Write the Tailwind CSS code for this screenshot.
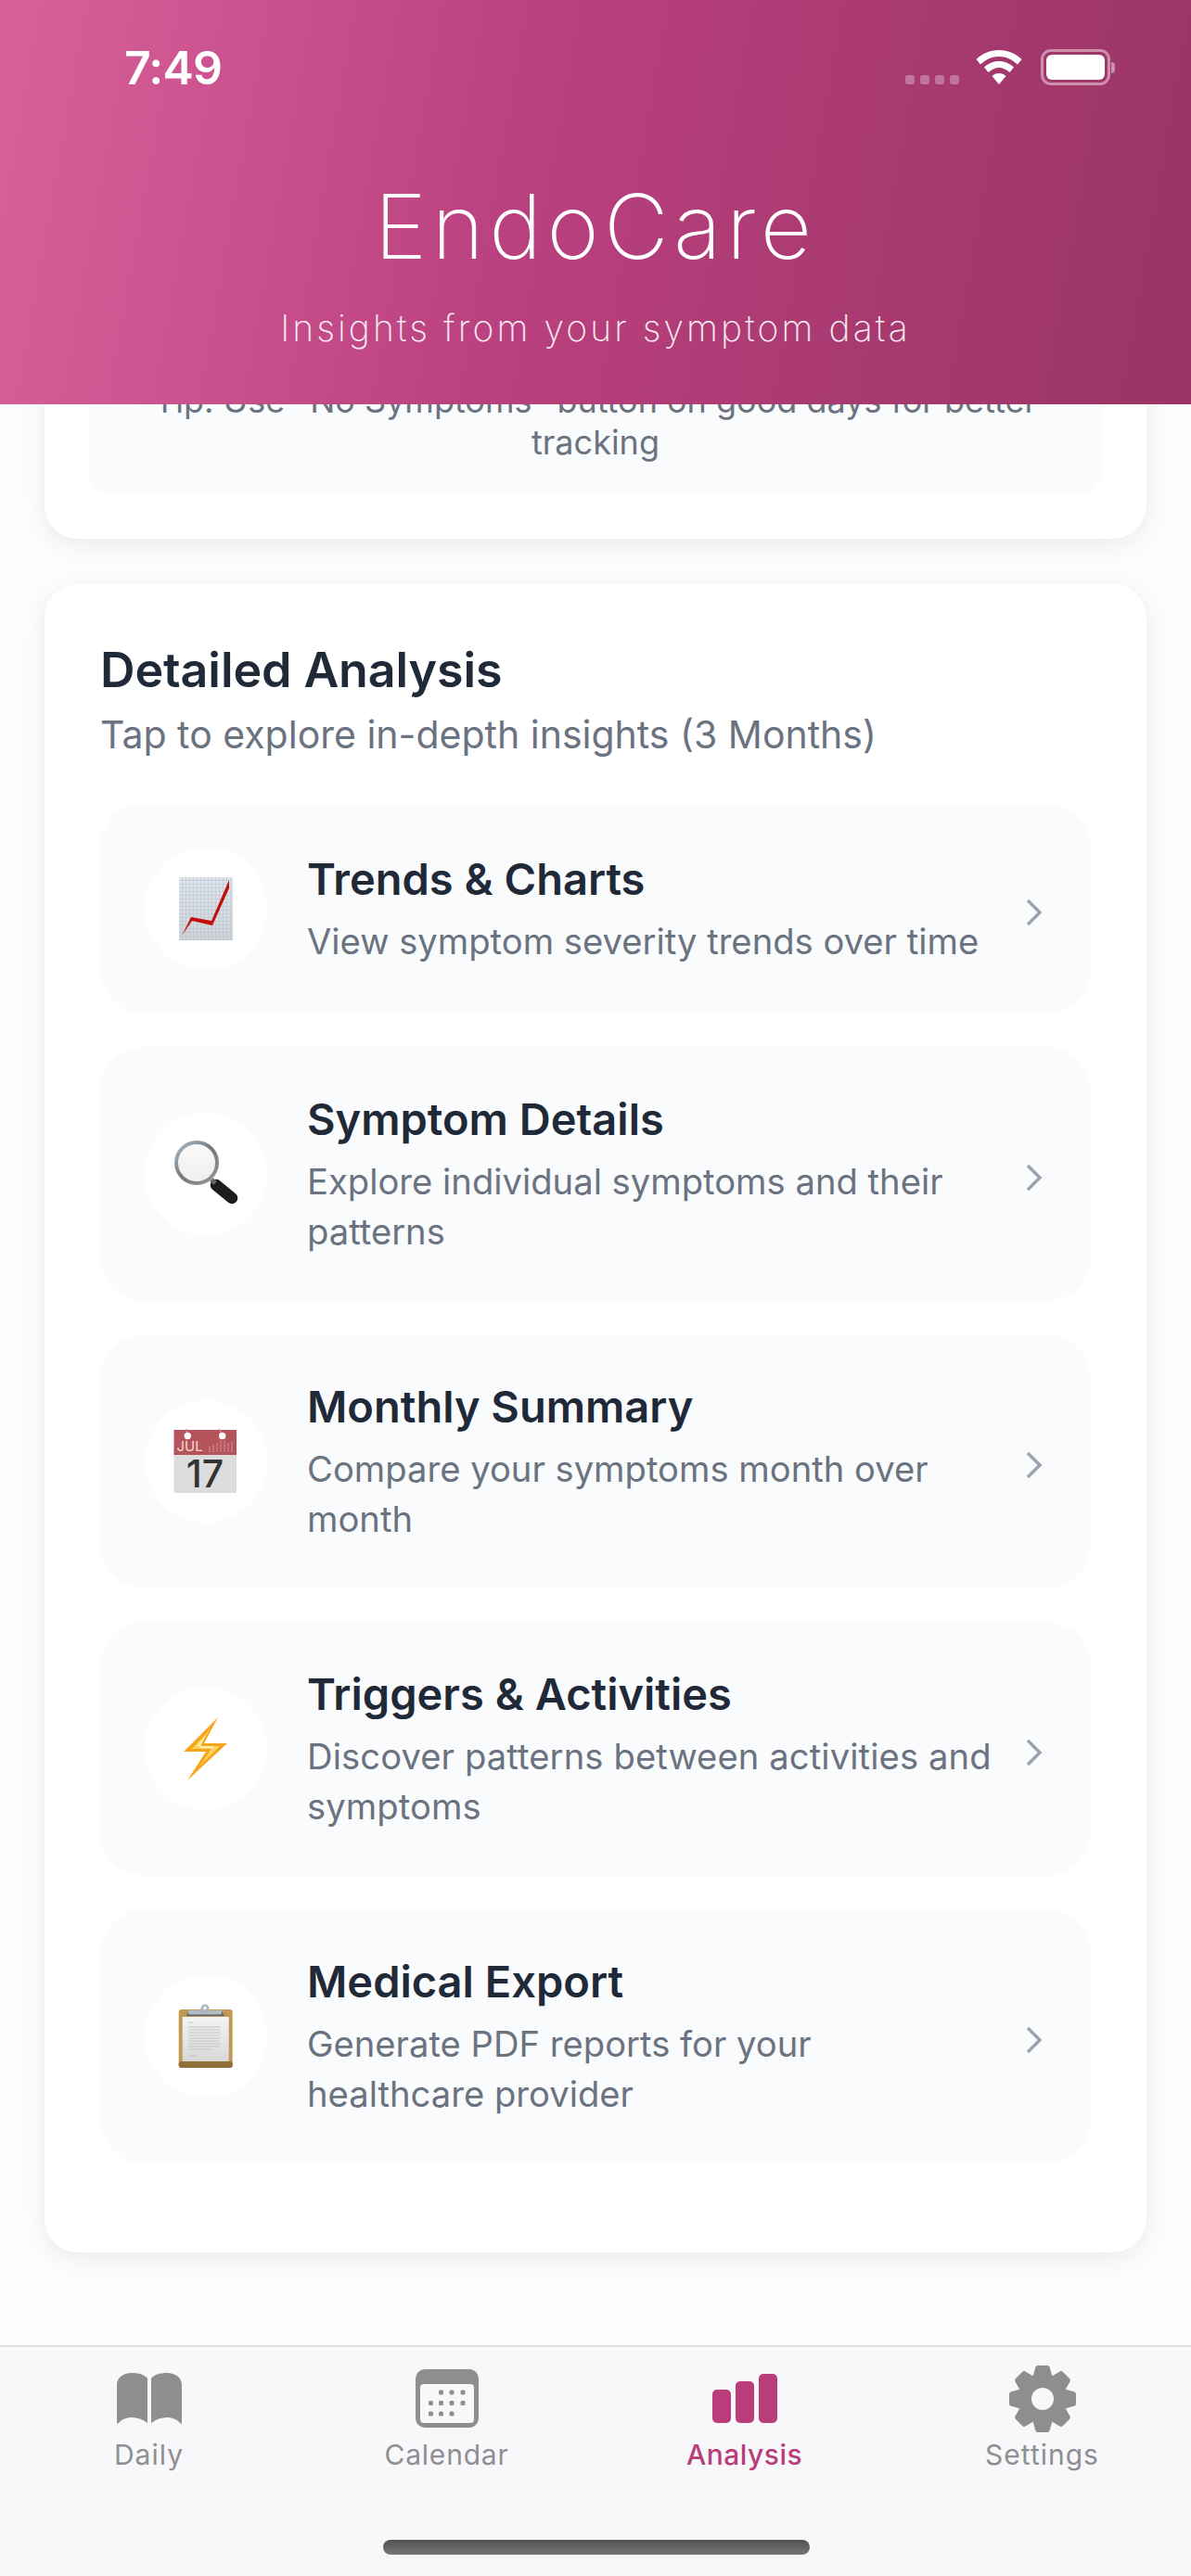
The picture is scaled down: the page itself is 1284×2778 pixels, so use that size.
<!DOCTYPE html>
<html><head><meta charset="utf-8"><script src="https://cdn.jsdelivr.net/npm/@tailwindcss/browser@4"></script></head>
<body class="m-0">
<div class="relative flex flex-col w-[1284px] h-[2778px] overflow-hidden bg-[#fbfcfd] font-['Inter',sans-serif]">
  <header class="relative z-10 flex-none h-[436px] bg-[linear-gradient(100deg,#d8619b_0%,#b9407e_45%,#993464_100%)] text-white">
    <div class="flex items-start justify-between pt-[50px] pl-[134px] pr-[82px] h-[150px]">
      <span class="text-[50px] leading-[46px] font-semibold tracking-[-0.8px]">7:49</span>
      <div class="flex items-start">
        <div class="flex gap-[6px] mt-[31px]"><i class="block w-[10px] h-[10px] rounded-[3px] bg-white/30"></i><i class="block w-[10px] h-[10px] rounded-[3px] bg-white/30"></i><i class="block w-[10px] h-[10px] rounded-[3px] bg-white/30"></i><i class="block w-[10px] h-[10px] rounded-[3px] bg-white/30"></i></div>
        <svg class="ml-[18px] mt-[4px]" width="50" height="37" viewBox="0 0 50 37"><path d="M25 0C15.500 0 7 3.800 0.500 10L5 15.500C10.500 10.300 17.500 7 25 7S39.500 10.300 45 15.500L49.500 10C43 3.800 34.500 0 25 0Z" fill="#fff"/><path d="M25 12C18.800 12 13.500 14.500 9 18.500L13.500 24C17 21 20.800 19 25 19S33 21 36.500 24L41 18.500C36.500 14.500 31.200 12 25 12Z" fill="#fff"/><path d="M25 25C22 25 19.700 26 17.500 28L25 37L32.500 28C30.300 26 28 25 25 25Z" fill="#fff"/></svg>
        <div class="ml-[20px] mt-[3px] flex items-center">
          <div class="w-[75px] h-[39px] rounded-[11px] border-[3px] border-white/45 p-[3px]"><div class="w-full h-full rounded-[6px] bg-white"></div></div>
          <div class="w-[4px] h-[12px] rounded-r-[4px] bg-white/45 ml-[1px]"></div>
        </div>
      </div>
    </div>
    <h1 class="text-center text-[96px] leading-[100px] font-extralight tracking-[5.400px] mt-[44px]">EndoCare</h1>
    <p class="text-center text-[39px] leading-[50px] font-extralight tracking-[3.100px] text-white/90 mt-[35px]">Insights from your symptom data</p>
  </header>

  <main class="flex-1 min-h-0 overflow-hidden px-[48px]">
    <section class="-mt-[68px] bg-white rounded-[36px] shadow-[0_6px_24px_rgba(0,0,0,0.07)] px-[48px] pt-[20px] pb-[48px]">
      <div class="h-[145px] rounded-[24px] bg-[#fafbfc] px-[48px] pt-[22px] text-center text-[36px] leading-[45px] text-[#6b7280]">Tip: Use "No Symptoms" button on good days for better tracking</div>
    </section>
    <section class="mt-[49px] bg-white rounded-[36px] shadow-[0_6px_24px_rgba(0,0,0,0.07)] px-[60px] pt-[61px] pb-[96px]">
      <h2 class="text-[52px] leading-[64px] font-semibold tracking-[-0.100px] text-[#1f2937]">Detailed Analysis</h2>
      <p class="text-[41px] leading-[60px] text-[#6b7280] mt-[7px] mb-[44px]">Tap to explore in-depth insights (3 Months)</p>
      <div class="flex flex-col gap-[36px]">

        <div class="flex items-center rounded-[48px] bg-[#fafbfc] pl-[48px] pr-[51px] h-[227px]">
          <div class="flex-none flex items-center justify-center w-[132px] h-[132px] rounded-full bg-white">
            <svg width="60" height="70" viewBox="0 0 60 70"><defs><linearGradient id="g1" x1="0" y1="0" x2="0" y2="1"><stop offset="0" stop-color="#dde5ec"/><stop offset="1" stop-color="#d0d4d8"/></linearGradient><pattern id="gr" width="4" height="4" patternUnits="userSpaceOnUse"><path d="M4 0H0V4" fill="none" stroke="#aab8c4" stroke-width=".7"/></pattern></defs><rect x="1" y="1" width="58" height="68" fill="url(#g1)"/><rect x="1" y="1" width="58" height="68" fill="url(#gr)"/><path d="M4 64L14 44L36 48L55 4V13L37 53L15 48Z" fill="#c40d0d"/></svg>
          </div>
          <div class="flex-1 min-w-0 ml-[43px]"><div class="max-w-[745px]"><h3 class="text-[47px] leading-[60px] font-semibold text-[#1f2937]">Trends &amp; Charts</h3><p class="text-[38.200px] leading-[54px] text-[#6b7280] mt-[10px]">View symptom severity trends over time</p></div></div>
          <svg class="flex-none mt-[8px]" width="20" height="32" viewBox="0 0 20 32"><path d="M3 3L16 16L3 29" fill="none" stroke="#9ca3af" stroke-width="3.500"/></svg>
        </div>

        <div class="flex items-center rounded-[48px] bg-[#fafbfc] pl-[48px] pr-[51px] h-[274px]">
          <div class="flex-none flex items-center justify-center w-[132px] h-[132px] rounded-full bg-white">
            <svg width="110" height="110" viewBox="-3 2 110 110"><defs><linearGradient id="rim" x1="0" y1="0" x2="1" y2="1"><stop offset="0" stop-color="#a9bccb"/><stop offset=".5" stop-color="#777"/><stop offset="1" stop-color="#9a9a9a"/></linearGradient><linearGradient id="gl" x1="0" y1="0" x2="0" y2="1"><stop offset="0" stop-color="#fafafa"/><stop offset="1" stop-color="#eeeeee"/></linearGradient></defs><path d="M63 69L80 83" stroke="#1d1d1d" stroke-width="12.500" stroke-linecap="round"/><path d="M58 63L62 67" stroke="#666" stroke-width="5"/><circle cx="42" cy="45" r="22" fill="url(#gl)" stroke="url(#rim)" stroke-width="4"/></svg>
          </div>
          <div class="flex-1 min-w-0 ml-[43px]"><div class="max-w-[745px]"><h3 class="text-[47px] leading-[60px] font-semibold text-[#1f2937]">Symptom Details</h3><p class="text-[38.200px] leading-[54px] text-[#6b7280] mt-[10px]">Explore individual symptoms and their patterns</p></div></div>
          <svg class="flex-none mt-[8px]" width="20" height="32" viewBox="0 0 20 32"><path d="M3 3L16 16L3 29" fill="none" stroke="#9ca3af" stroke-width="3.500"/></svg>
        </div>

        <div class="flex items-center rounded-[48px] bg-[#fafbfc] pl-[48px] pr-[51px] h-[274px]">
          <div class="flex-none flex items-center justify-center w-[132px] h-[132px] rounded-full bg-white">
            <svg width="110" height="110" viewBox="-3 2 110 110"><rect x="17.500" y="23" width="67.500" height="27" fill="#b5545c"/><rect x="17.500" y="50" width="67.500" height="41" fill="#dcdcdc"/><path d="M31 22L32 28M66 22L69 28" stroke="#c98a8e" stroke-width="1.500"/><circle cx="32.300" cy="29.500" r="3.700" fill="#fff"/><circle cx="69.700" cy="29.500" r="3.700" fill="#fff"/><text x="20.500" y="46" font-size="15" fill="#f3dccd" font-family="Inter">JUL</text><path d="M56 41V47M60 39V47M64 37V47M68 35V47M72 35V47M76 37V47M80 36V47" stroke="#dca6a4" stroke-width="1.300" stroke-dasharray="1.300 1"/><text x="51" y="85" text-anchor="middle" font-size="41" font-weight="500" fill="#333" font-family="Inter">17</text></svg>
          </div>
          <div class="flex-1 min-w-0 ml-[43px]"><div class="max-w-[745px]"><h3 class="text-[47px] leading-[60px] font-semibold text-[#1f2937]">Monthly Summary</h3><p class="text-[38.200px] leading-[54px] text-[#6b7280] mt-[10px]">Compare your symptoms month over month</p></div></div>
          <svg class="flex-none mt-[8px]" width="20" height="32" viewBox="0 0 20 32"><path d="M3 3L16 16L3 29" fill="none" stroke="#9ca3af" stroke-width="3.500"/></svg>
        </div>

        <div class="flex items-center rounded-[48px] bg-[#fafbfc] pl-[48px] pr-[51px] h-[274px]">
          <div class="flex-none flex items-center justify-center w-[132px] h-[132px] rounded-full bg-white">
            <svg width="110" height="110" viewBox="-3 2 110 110"><path d="M65 23L28 60H52L32 91L75 51H50Z" fill="#f6a51c"/><path d="M58 34L37 57H58L45 76L67 54H44Z" fill="#ffd35c"/><path d="M53 41L42 54H60L56 61L60 56H45Z" fill="#fff0b0"/></svg>
          </div>
          <div class="flex-1 min-w-0 ml-[43px]"><div class="max-w-[745px]"><h3 class="text-[47px] leading-[60px] font-semibold text-[#1f2937]">Triggers &amp; Activities</h3><p class="text-[38.200px] leading-[54px] tracking-[0.100px] text-[#6b7280] mt-[10px]">Discover patterns between activities and symptoms</p></div></div>
          <svg class="flex-none mt-[8px]" width="20" height="32" viewBox="0 0 20 32"><path d="M3 3L16 16L3 29" fill="none" stroke="#9ca3af" stroke-width="3.500"/></svg>
        </div>

        <div class="flex items-center rounded-[48px] bg-[#fafbfc] pl-[48px] pr-[51px] h-[274px]">
          <div class="flex-none flex items-center justify-center w-[132px] h-[132px] rounded-full bg-white">
            <svg width="110" height="110" viewBox="-3 2 110 110"><defs><linearGradient id="pp" x1="0" y1="0" x2="0" y2="1"><stop offset="0" stop-color="#f4f4f4"/><stop offset="1" stop-color="#d8d8d8"/></linearGradient></defs><rect x="22.700" y="28" width="58" height="63" rx="3" fill="#c29a55"/><rect x="22.700" y="84" width="58" height="7" rx="3" fill="#8f6e38"/><rect x="26.700" y="36" width="50" height="48" fill="url(#pp)"/><path d="M33 42H38M33 47H68M33 50H67M33 53H68M33 56H66M33 59H68M33 62H66M33 65H68M33 68H66M33 71H58M33 78H42" stroke="#c4c4c4" stroke-width="1"/><path d="M31 35L33 30H69L72 35Z" fill="#59626a"/><rect x="33" y="29" width="36" height="4.500" rx="1" fill="#b1bcc4"/><circle cx="51" cy="27" r="4.500" fill="#aab6be"/><circle cx="51" cy="26.500" r="1.700" fill="#fff"/></svg>
          </div>
          <div class="flex-1 min-w-0 ml-[43px]"><div class="max-w-[745px]"><h3 class="text-[47px] leading-[60px] font-semibold text-[#1f2937]">Medical Export</h3><p class="text-[38.200px] leading-[54px] text-[#6b7280] mt-[10px]">Generate PDF reports for your healthcare provider</p></div></div>
          <svg class="flex-none mt-[8px]" width="20" height="32" viewBox="0 0 20 32"><path d="M3 3L16 16L3 29" fill="none" stroke="#9ca3af" stroke-width="3.500"/></svg>
        </div>
      </div>
    </section>
  </main>

  <nav class="relative flex-none h-[249px] bg-[#f8f8fa] border-t-[2px] border-[#dedee2]">
    <div class="grid grid-cols-4">
      <div class="flex flex-col items-center">
        <div class="h-[96px] flex items-center pt-[15px]"><svg width="70" height="55" viewBox="0 0 70 55"><path d="M0 13C0 5 7 0 16 0C24 0 30 2 33 6V54C28 50 22 48 16 48C10 48 5 50 1 55L0 54Z" fill="#8e8e8e"/><path d="M70 13C70 5 63 0 54 0C46 0 40 2 37 6V54C42 50 48 48 54 48C60 48 65 50 69 55L70 54Z" fill="#8e8e8e"/></svg></div>
        <span class="text-[30px] leading-[36px] tracking-[1px] text-[#8e8e93] mt-[2px]">Daily</span>
      </div>
      <div class="flex flex-col items-center">
        <div class="h-[96px] flex items-center pt-[15px]"><svg width="68" height="63" viewBox="0 0 68 63"><rect width="68" height="63" rx="10" fill="#8e8e8e"/><rect x="5" y="16" width="58" height="42" rx="4" fill="#f8f8fa"/><g fill="#8e8e8e"><rect x="25" y="22.500" width="5" height="5" rx="1.500"/><rect x="36.500" y="22.500" width="5" height="5" rx="1.500"/><rect x="48.500" y="22.500" width="5" height="5" rx="1.500"/><rect x="14" y="34" width="5" height="5" rx="1.500"/><rect x="25" y="34" width="5" height="5" rx="1.500"/><rect x="36.500" y="34" width="5" height="5" rx="1.500"/><rect x="48.500" y="34" width="5" height="5" rx="1.500"/><rect x="14" y="45.500" width="5" height="5" rx="1.500"/><rect x="25" y="45.500" width="5" height="5" rx="1.500"/><rect x="36.500" y="45.500" width="5" height="5" rx="1.500"/></g></svg></div>
        <span class="text-[30px] leading-[36px] tracking-[0.800px] text-[#8e8e93] mt-[2px]">Calendar</span>
      </div>
      <div class="flex flex-col items-center">
        <div class="h-[96px] flex items-center pt-[15px]"><svg width="70" height="53" viewBox="0 0 70 53"><rect y="17" width="20" height="36" rx="5" fill="#b83d7a"/><rect x="25" y="8" width="20" height="45" rx="5" fill="#b83d7a"/><rect x="50" y="0" width="20" height="53" rx="5" fill="#b83d7a"/></svg></div>
        <span class="text-[30px] leading-[36px] tracking-[0.500px] text-[#b83d7a] font-medium mt-[2px]">Analysis</span>
      </div>
      <div class="flex flex-col items-center">
        <div class="h-[96px] flex items-center pt-[15px]"><svg width="72" height="72" viewBox="-36 -36 72 72"><g fill="#8e8e8e"><circle r="26"/><path d="M-5 -36H5Q7.500 -36 8 -33L11 -22H-11L-8 -33Q-7.500 -36 -5 -36Z"/><path transform="rotate(45)" d="M-5 -36H5Q7.500 -36 8 -33L11 -22H-11L-8 -33Q-7.500 -36 -5 -36Z"/><path transform="rotate(90)" d="M-5 -36H5Q7.500 -36 8 -33L11 -22H-11L-8 -33Q-7.500 -36 -5 -36Z"/><path transform="rotate(135)" d="M-5 -36H5Q7.500 -36 8 -33L11 -22H-11L-8 -33Q-7.500 -36 -5 -36Z"/><path transform="rotate(180)" d="M-5 -36H5Q7.500 -36 8 -33L11 -22H-11L-8 -33Q-7.500 -36 -5 -36Z"/><path transform="rotate(225)" d="M-5 -36H5Q7.500 -36 8 -33L11 -22H-11L-8 -33Q-7.500 -36 -5 -36Z"/><path transform="rotate(270)" d="M-5 -36H5Q7.500 -36 8 -33L11 -22H-11L-8 -33Q-7.500 -36 -5 -36Z"/><path transform="rotate(315)" d="M-5 -36H5Q7.500 -36 8 -33L11 -22H-11L-8 -33Q-7.500 -36 -5 -36Z"/></g><circle r="12" fill="#f8f8fa"/></svg></div>
        <span class="text-[30px] leading-[36px] tracking-[1px] text-[#8e8e93] mt-[2px]">Settings</span>
      </div>
    </div>
    <div class="absolute left-[413px] top-[208px] w-[460px] h-[16px] rounded-full bg-[linear-gradient(#505050,#777)]"></div>
  </nav>
</div>
</body></html>
